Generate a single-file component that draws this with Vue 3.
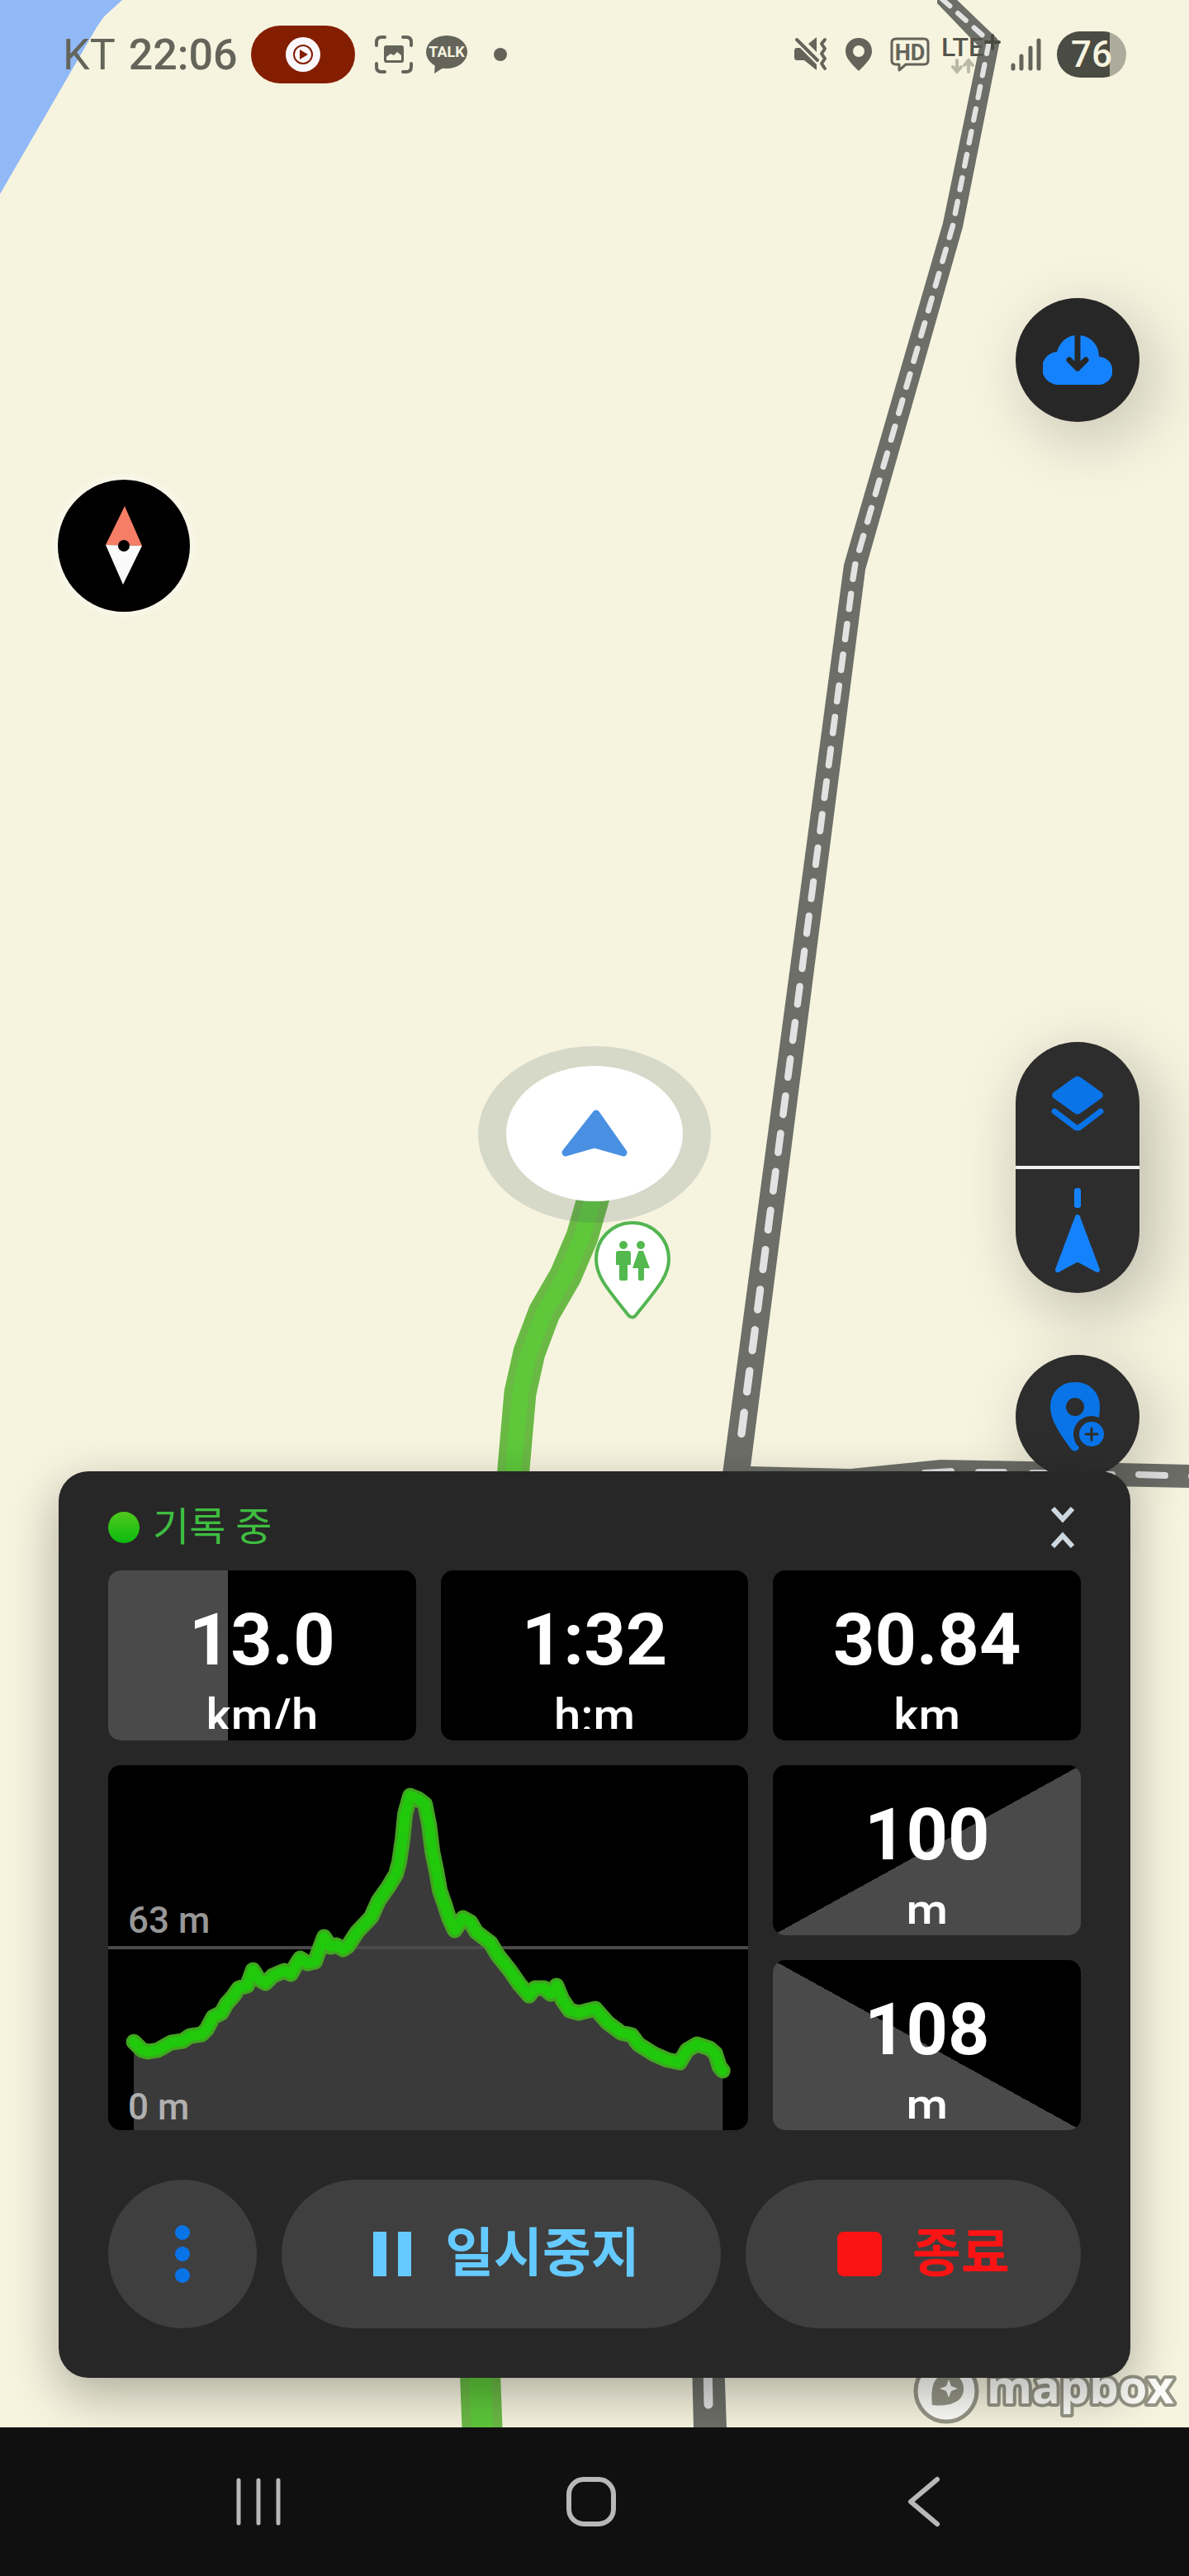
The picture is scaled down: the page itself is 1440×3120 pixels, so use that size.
<script setup>
const speedRatio = 39

const stats = [
  { id: 'speed', value: '13.0', unit: 'km/h', ratio: speedRatio },
  { id: 'time', value: '1:32', unit: 'h:m' },
  { id: 'distance', value: '30.84', unit: 'km' },
]

const climbs = [
  { id: 'ascent', value: '100', unit: 'm' },
  { id: 'descent', value: '108', unit: 'm' },
]

// elevation profile, drawn in a 774 x 442 box
const elevation = [
  [31, 335], [41, 345], [48, 347], [60, 345], [76, 336], [90, 334], [99, 328], [113, 326],
  [119, 320], [127, 305], [137, 300], [143, 289], [151, 280], [158, 270], [168, 267],
  [171, 259], [175, 248], [182, 259], [190, 264], [199, 255], [213, 249], [221, 253],
  [227, 242], [232, 234], [241, 240], [250, 238], [254, 227], [261, 208], [269, 220],
  [276, 218], [284, 223], [290, 219], [301, 202], [318, 184], [327, 164], [339, 147],
  [348, 132], [352, 117], [356, 89], [359, 59], [365, 37], [375, 41], [383, 47],
  [388, 72], [392, 105], [397, 129], [401, 152], [407, 169], [412, 185], [419, 200],
  [429, 185], [438, 190], [445, 202], [462, 215], [471, 230], [486, 249], [497, 265],
  [509, 279], [516, 270], [527, 270], [535, 277], [542, 267], [549, 284], [558, 297],
  [569, 300], [589, 295], [604, 312], [620, 324], [633, 327], [641, 338], [660, 350],
  [676, 357], [691, 360], [700, 345], [712, 338], [727, 343], [734, 349], [739, 365],
  [743, 370],
]
const line = elevation.map((p) => p.join(',')).join(' ')
const area = `31,442 ${line} 743,442`

// centre dashes of the tilted road: they grow as the road comes closer
const road = [[1140, -2], [1198, 50], [1154, 273], [1035, 686], [892, 1782]]

function roadPoint(dist) {
  let left = dist
  for (let i = 1; i < road.length; i++) {
    const [x1, y1] = road[i - 1]
    const [x2, y2] = road[i]
    const len = Math.hypot(x2 - x1, y2 - y1)
    if (left <= len) return [x1 + ((x2 - x1) * left) / len, y1 + ((y2 - y1) * left) / len]
    left -= len
  }
  return null
}

const dashes = []
let pos = 1
while (roadPoint(pos)) {
  const start = roadPoint(pos)
  const period = 26 + start[1] * 0.015
  const end = roadPoint(pos + period * 0.5)
  if (!end) break
  dashes.push({ x1: start[0], y1: start[1], x2: end[0], y2: end[1], width: 6 + start[1] * 0.002 })
  pos += period
}
</script>

<template>
  <div class="screen">
    <main class="map-view">
      <!-- map -->
      <svg class="map-canvas" viewBox="0 0 1440 2940" preserveAspectRatio="xMidYMin slice" aria-hidden="true">
        <path d="M0 0H148L126 20L117 33L0 235Z" fill="#91b9f8" />

        <g fill="#6c6e67">
          <path d="M875 1782L908 1776L1030 1779L1139 1768L1356 1772L1440 1774V1802L1139 1796L875 1810Z" />
          <path d="M1135 -2V4L1186 57L1142 270L1022 684L873 1800H906L1048 690L1166 275L1210 54Q1210 49 1207 46L1157 -2Z" />
          <path d="M838 2860H877L880 2940H840Z" />
        </g>
        <g stroke="#e2e2e2" stroke-linecap="round">
          <line v-for="(d, i) in dashes" :key="i" :x1="d.x1" :y1="d.y1" :x2="d.x2" :y2="d.y2" :stroke-width="d.width" />
          <g stroke-width="8">
            <path d="M1120 1784L1152 1782M1185 1783L1216 1783M1250 1784L1281 1784M1316 1785L1347 1786M1379 1786L1411 1787M1443 1788L1460 1788" fill="none" />
            <path d="M857 2860L858 2912" stroke-width="11" />
          </g>
        </g>

        <g fill="none">
          <path d="M723 1430L718 1453L705 1498L685 1545L659 1590L641 1638L630 1687L621 1790" stroke="#6ab945" stroke-width="39" />
          <path d="M723 1430L718 1453L705 1498L685 1545L659 1590L641 1638L630 1687L621 1790" stroke="#5ec83a" stroke-width="20" />
          <path d="M581 2860L584 2942" stroke="#6ab945" stroke-width="49" />
          <path d="M581 2860L584 2942" stroke="#5ec83a" stroke-width="26" />
        </g>

        <ellipse cx="720" cy="1374" rx="141" ry="107" fill="#465a64" fill-opacity=".18" />
        <ellipse cx="720" cy="1373" rx="107" ry="82" fill="#fff" />
        <path d="M722 1349L755 1396L720 1386L685 1396Z" fill="#4a90e2" stroke="#4a90e2" stroke-width="9" stroke-linejoin="round" />

        <path d="M766 1481C791 1481 810 1501 810 1525C810 1545 798 1558 770 1593Q766 1598 761 1593C733 1558 722 1545 722 1525C722 1501 741 1481 766 1481Z" fill="#fff" stroke="#53b552" stroke-width="4" />
        <g fill="#53b94f">
          <circle cx="755" cy="1508" r="5" />
          <path d="M749 1515H761Q764 1515 764 1518V1532H760V1549Q760 1551 758 1551H752Q750 1551 750 1549V1532H746V1518Q746 1515 749 1515Z" />
          <circle cx="776" cy="1508" r="5" />
          <path d="M774 1515H779L787 1536H780V1549Q780 1551 778 1551H775Q773 1551 773 1549V1536H766L773 1516Z" />
        </g>

        <g opacity=".85">
          <circle cx="1146" cy="2896" r="37" fill="#fff" stroke="#858677" stroke-width="5" />
          <path d="M1129 2913C1126 2886 1134 2875 1149 2875C1160 2875 1167 2883 1167 2893C1167 2910 1149 2915 1129 2913Z" fill="#858677" />
          <path d="M1149 2882L1152 2890L1160 2893L1152 2896L1149 2904L1146 2896L1138 2893L1146 2890Z" fill="#fff" />
          <text class="logo-text" x="1195" y="2911">mapbox</text>
        </g>
      </svg>

      <!-- status bar -->
      <header class="status-bar">
        <div class="status-group">
          <span class="carrier">KT</span>
          <time class="clock">22:06</time>
          <span class="record-pill">
            <svg width="42" height="42" viewBox="0 0 42 42">
              <circle cx="21" cy="21" r="21" fill="#fbf8fd" />
              <circle cx="21" cy="21" r="11" fill="none" stroke="#841e00" stroke-width="2" />
              <path d="M17 15L27 21L17 27Z" fill="#841e00" />
            </svg>
          </span>
          <svg class="icon-capture" width="46" height="46" viewBox="0 0 46 46">
            <path d="M2 12V8Q2 2 8 2H12M34 2H38Q44 2 44 8V12M44 34V38Q44 44 38 44H34M12 44H8Q2 44 2 38V34" fill="none" stroke="#64645a" stroke-width="4" stroke-linecap="round" />
            <path d="M14 12H32Q35 12 35 15V30Q35 33 32 33H14Q11 33 11 30V15Q11 12 14 12ZM14 29Q14 30 15 30H31Q32 30 32 29V24L27 20L23 24L19 22L14 26Z" fill="#64645a" fill-rule="evenodd" />
          </svg>
          <svg class="icon-talk" width="50" height="48" viewBox="0 0 50 48">
            <ellipse cx="25" cy="21" rx="25" ry="20" fill="#64645a" />
            <path d="M11 34L10 47L24 38Z" fill="#64645a" />
            <text x="25" y="27" text-anchor="middle" class="talk-text">TALK</text>
          </svg>
          <span class="more-dot"></span>
        </div>

        <div class="status-group">
          <svg width="40" height="42" viewBox="0 0 40 42">
            <path d="M3 13H7L27 33V40L12 28H3Q0 28 0 24V17Q0 13 3 13ZM17 8L27 0V18Z" fill="#64645a" />
            <path d="M3 3L28 28" stroke="#64645a" stroke-width="4" stroke-linecap="round" />
            <path d="M37 3L33 8L37 14L33 20L37 26L33 32L37 38" fill="none" stroke="#64645a" stroke-width="4" stroke-linecap="round" stroke-linejoin="round" />
          </svg>
          <svg class="icon-pin" width="34" height="42" viewBox="0 0 34 42">
            <path d="M17 1C7 1 1 8 1 17C1 25 7 31 17 41C27 31 33 25 33 17C33 8 27 1 17 1ZM17 10A7 7 0 1 1 17 24A7 7 0 1 1 17 10Z" fill="#64645a" fill-rule="evenodd" />
          </svg>
          <svg class="icon-hd" width="48" height="42" viewBox="0 0 48 42">
            <path d="M7 2H41Q46 2 46 7V28Q46 33 41 33H19L11 40V33H7Q2 33 2 28V7Q2 2 7 2Z" fill="none" stroke="#64645a" stroke-width="3" stroke-linejoin="round" />
            <text x="24" y="28" text-anchor="middle" class="hd-text">HD</text>
          </svg>
          <svg class="icon-lte" width="74" height="60" viewBox="0 -6 74 60">
            <text x="0" y="26" class="lte-text">LTE</text>
            <path d="M62 1V17M54 9H70" stroke="#4b4b43" stroke-width="4" stroke-linecap="round" />
            <path d="M19 31V44M14 39L19 45L24 39M33 45V32M28 37L33 31L38 37" fill="none" stroke="#b9b9a8" stroke-width="4" stroke-linecap="round" />
          </svg>
          <svg class="icon-signal" width="38" height="40" viewBox="0 0 38 40">
            <path d="M3 33V37M13 22V37M24 12V37M34 3V37" stroke="#64645a" stroke-width="5" stroke-linecap="round" />
          </svg>
          <span class="battery">76</span>
        </div>
      </header>

      <!-- map controls -->
      <button class="round-btn download" type="button" aria-label="Download">
        <svg width="84" height="62" viewBox="0 0 84 62">
          <path d="M21 61A20 20 0 0 1 17 21C21 8 30 1 42 1C57 1 68 12 68 27A17 17 0 0 1 67 61Z" fill="#1582fd" />
          <path d="M42 0V41M32 31L42 41L52 31" fill="none" stroke="#272727" stroke-width="7" stroke-linecap="round" stroke-linejoin="round" />
        </svg>
      </button>

      <button class="compass" type="button" aria-label="Compass">
        <svg width="44" height="96" viewBox="0 0 44 96">
          <path d="M23 0L0 47L44 48Z" fill="#f77e66" />
          <path d="M0 47L44 48L21 95Z" fill="#fafafa" />
          <circle cx="22" cy="48" r="7" />
        </svg>
      </button>

      <div class="side-tools">
        <div class="tool-pill">
          <button type="button" aria-label="Map layers">
            <svg width="64" height="70" viewBox="0 0 64 70">
              <path d="M28 3Q32 0 36 3L61 21Q65 25 61 28L36 46Q32 49 28 46L3 28Q-1 25 3 21Z" fill="#0974e8" />
              <path d="M4 44L29 63Q32 65 35 63L60 44" fill="none" stroke="#0974e8" stroke-width="7" stroke-linecap="round" />
            </svg>
          </button>
          <button type="button" aria-label="Follow heading">
            <svg width="56" height="104" viewBox="0 0 56 104">
              <rect x="24" y="0" width="8" height="24" rx="3" fill="#1582fd" />
              <path d="M28 35L52 99L28 86L4 99Z" fill="#1582fd" stroke="#1582fd" stroke-width="6" stroke-linejoin="round" />
            </svg>
          </button>
        </div>
        <button class="round-btn" type="button" aria-label="Add place">
          <svg width="68" height="84" viewBox="0 0 68 84">
            <path d="M31 0C13 0 1 13 1 30C1 46 13 63 26 81Q31 86 35 81L60 43Q61 36 61 30C61 13 49 0 31 0Z" fill="#0974e8" />
            <circle cx="31" cy="30" r="11" fill="#2d2d2d" />
            <circle cx="51" cy="63" r="22" fill="#2d2d2d" />
            <circle cx="51" cy="63" r="15" fill="#0974e8" />
            <path d="M51 56V70M44 63H58" stroke="#2d2d2d" stroke-width="3" stroke-linecap="round" />
          </svg>
        </button>
      </div>

      <!-- recording panel -->
      <section class="panel">
        <div class="panel-header">
          <span class="rec-dot"></span>
          <h1 class="panel-title">기록 중</h1>
          <button class="collapse-btn" type="button" aria-label="Collapse">
            <svg width="28" height="50" viewBox="0 0 28 50">
              <path d="M2 2L14 15L26 2M2 48L14 35L26 48" fill="none" stroke="#cdd7df" stroke-width="6" />
            </svg>
          </button>
        </div>

        <div class="stats">
          <div v-for="s in stats" :key="s.id" class="stat">
            <span v-if="s.ratio" class="stat-fill" :style="{ width: s.ratio + '%' }"></span>
            <div class="stat-body">
              <span class="stat-value">{{ s.value }}</span>
              <span class="stat-unit">{{ s.unit }}</span>
            </div>
          </div>

          <div class="chart">
            <svg viewBox="0 0 774 442" preserveAspectRatio="none">
              <polygon :points="area" fill="#3a3a3a" />
              <path d="M0 221H774" stroke="#4a4a4a" stroke-width="4" />
              <g fill="none" stroke-linecap="round" stroke-linejoin="round">
                <polyline :points="line" stroke="#3fa620" stroke-width="19" />
                <polyline :points="line" stroke="#20c90b" stroke-width="12" />
              </g>
            </svg>
            <span class="chart-label middle">63 m</span>
            <span class="chart-label bottom">0 m</span>
          </div>

          <div v-for="c in climbs" :key="c.id" class="stat" :class="c.id">
            <div class="stat-body">
              <span class="stat-value">{{ c.value }}</span>
              <span class="stat-unit">{{ c.unit }}</span>
            </div>
          </div>
        </div>

        <div class="actions">
          <button class="action more" type="button" aria-label="More">
            <svg width="18" height="70" viewBox="0 0 18 70" fill="#0974e8">
              <circle cx="9" cy="9" r="9" />
              <circle cx="9" cy="35" r="9" />
              <circle cx="9" cy="61" r="9" />
            </svg>
          </button>
          <button class="action pause" type="button">
            <svg width="72" height="54" viewBox="0 0 72 54">
              <path d="M13 0H29V54H13ZM43 0H59V54H43Z" fill="#65caff" />
            </svg>
            일시중지
          </button>
          <button class="action stop" type="button">
            <svg width="72" height="54" viewBox="0 0 72 54">
              <rect x="9" y="0" width="54" height="54" rx="8" fill="#fc1414" />
            </svg>
            종료
          </button>
        </div>
      </section>
    </main>

    <!-- system navigation -->
    <nav class="nav-bar">
      <button type="button" aria-label="Recents">
        <svg width="62" height="62" viewBox="0 0 62 62">
          <path d="M7 5V57M31 5V57M55 5V57" stroke="#b8b8b8" stroke-width="5" stroke-linecap="round" />
        </svg>
      </button>
      <button type="button" aria-label="Home">
        <svg width="62" height="62" viewBox="0 0 62 62">
          <rect x="4" y="4" width="54" height="54" rx="18" fill="none" stroke="#b8b8b8" stroke-width="6" />
        </svg>
      </button>
      <button type="button" aria-label="Back">
        <svg width="62" height="62" viewBox="0 0 62 62">
          <path d="M47 4L15 31L47 58" fill="none" stroke="#b8b8b8" stroke-width="6" stroke-linecap="round" stroke-linejoin="round" />
        </svg>
      </button>
    </nav>
  </div>
</template>

<style>
body {
  margin: 0;
  background: #101010;
}
</style>

<style scoped>
.screen {
  display: flex;
  flex-direction: column;
  min-height: 100vh;
  font-family: Roboto, "Noto Sans CJK KR", sans-serif;
}

button {
  display: flex;
  align-items: center;
  justify-content: center;
  padding: 0;
  border: 0;
  background: none;
  font: inherit;
  cursor: pointer;
}

svg {
  display: block;
  flex-shrink: 0;
}

/* map */
.map-view {
  position: relative;
  display: flex;
  flex: 1;
  flex-direction: column;
  overflow: hidden;
  background: #f6f4df;
}

.map-view > * {
  position: relative;
}

.map-view > .map-canvas {
  position: absolute;
  top: 0;
  left: 0;
  width: 100%;
  height: 100%;
}

.logo-text {
  font-family: "Open Sans", sans-serif;
  font-size: 56px;
  font-weight: 700;
  fill: #fff;
  stroke: #858677;
  stroke-width: 8px;
  stroke-linejoin: round;
  paint-order: stroke;
}

/* status bar */
.status-bar {
  display: flex;
  align-items: center;
  justify-content: space-between;
  height: 132px;
  padding: 0 76px;
  color: #64645a;
}

.status-group {
  display: flex;
  align-items: center;
}

.carrier {
  font-size: 52px;
  font-weight: 400;
}

.clock {
  margin-left: 16px;
  font-size: 52px;
  font-weight: 500;
}

.record-pill {
  display: flex;
  align-items: center;
  justify-content: center;
  width: 126px;
  height: 70px;
  margin-left: 16px;
  border-radius: 35px;
  background: #841e00;
}

.icon-capture {
  margin-left: 24px;
}

.icon-talk {
  margin-left: 16px;
}

.talk-text {
  font-size: 18px;
  font-weight: 700;
  fill: #f6f4df;
}

.more-dot {
  width: 16px;
  height: 16px;
  margin-left: 32px;
  border-radius: 50%;
  background: #64645a;
}

.icon-pin,
.icon-hd {
  margin-left: 21px;
}

.hd-text {
  font-size: 27px;
  font-weight: 700;
  fill: #64645a;
}

.icon-lte {
  margin-left: 14px;
}

.lte-text {
  font-size: 32px;
  font-weight: 500;
  fill: #55554c;
}

.icon-signal {
  margin-left: 10px;
}

.battery {
  width: 84px;
  margin-left: 18px;
  border-radius: 28px;
  background: linear-gradient(to right, #4a4b42 76%, #abac9b 76%);
  color: #f6f4df;
  font-size: 44px;
  font-weight: 500;
  line-height: 56px;
  text-align: center;
}

/* floating controls */
.round-btn {
  width: 150px;
  height: 150px;
  border-radius: 50%;
  background: #2d2d2d;
  box-shadow: 15px 20px 80px rgba(0, 0, 0, 0.2);
}

.download {
  align-self: flex-end;
  margin: 229px 60px 0 0;
  background: #272727;
}

.compass {
  align-self: flex-start;
  width: 160px;
  height: 160px;
  margin: 70px 0 0 70px;
  border-radius: 50%;
  background: #000;
  box-shadow: 0 0 6px 6px rgba(255, 255, 255, 0.3);
}

.side-tools {
  display: flex;
  flex-direction: column;
  align-self: flex-end;
  gap: 75px;
  margin: auto 60px -9px 0;
}

.tool-pill {
  border-radius: 75px;
  background: #2d2d2d;
  box-shadow: 15px 20px 80px rgba(0, 0, 0, 0.25);
}

.tool-pill button {
  width: 150px;
  height: 150px;
}

.tool-pill button + button {
  border-top: 4px solid #f0f0f0;
  height: 154px;
}

/* panel */
.panel {
  margin: 0 71px 60px;
  padding: 0 60px 60px;
  border-radius: 36px;
  background: #272727;
  box-shadow: 0 20px 60px rgba(0, 0, 0, 0.3);
}

.panel-header {
  display: flex;
  align-items: center;
  box-sizing: border-box;
  height: 120px;
  padding-top: 16px;
}

.rec-dot {
  width: 38px;
  height: 38px;
  border-radius: 50%;
  background: linear-gradient(#52c81f, #0abb0e);
}

.panel-title {
  margin: 0 0 0 16px;
  color: #3fbe41;
  font-size: 48px;
  font-weight: 400;
  line-height: 56px;
}

.collapse-btn {
  width: 44px;
  height: 64px;
  margin-left: auto;
}

.stats {
  display: grid;
  grid-template-columns: repeat(3, 1fr);
  grid-auto-rows: 206px;
  gap: 30px;
}

.stat {
  position: relative;
  overflow: hidden;
  border-radius: 15px;
  background: #000;
}

.stat.ascent {
  background: linear-gradient(to bottom right, #000 50%, #4a4a4a 50%);
}

.stat.descent {
  background: linear-gradient(to bottom left, #000 50%, #4a4a4a 50%);
}

.stat-fill {
  position: absolute;
  top: 0;
  bottom: 0;
  left: 0;
  background: #4a4a4a;
}

/* the unit line runs a few pixels past the body and is clipped there */
.stat-body {
  position: relative;
  display: flex;
  flex-direction: column;
  align-items: center;
  box-sizing: border-box;
  height: 192px;
  padding-top: 34px;
  overflow: hidden;
  color: #fff;
}

.stat-value {
  font-size: 88px;
  font-weight: 700;
  line-height: 100px;
}

.stat-unit {
  font-size: 58px;
  font-weight: 500;
  line-height: 84px;
}

.chart {
  position: relative;
  grid-row: span 2;
  grid-column: span 2;
  overflow: hidden;
  border-radius: 15px;
  background: #000;
}

.chart svg {
  width: 100%;
  height: 100%;
}

.chart-label {
  position: absolute;
  left: 24px;
  font-size: 44px;
  font-weight: 500;
  line-height: 52px;
}

.chart-label.middle {
  bottom: 228px;
  color: #979797;
}

.chart-label.bottom {
  bottom: 2px;
  color: #b0b0b0;
}

.actions {
  display: flex;
  gap: 30px;
  margin-top: 60px;
}

.action {
  gap: 28px;
  height: 180px;
  border-radius: 90px;
  background: #3f3f3f;
  font-size: 64px;
  font-weight: 700;
  line-height: 72px;
}

.more {
  width: 180px;
}

.pause {
  flex: 15;
  color: #65caff;
}

.stop {
  flex: 11;
  padding-left: 16px;
  color: #fc1414;
}

/* system navigation */
.nav-bar {
  display: flex;
  align-items: center;
  justify-content: space-around;
  height: 180px;
  padding: 0 120px 0 111px;
  background: #101010;
}
</style>
